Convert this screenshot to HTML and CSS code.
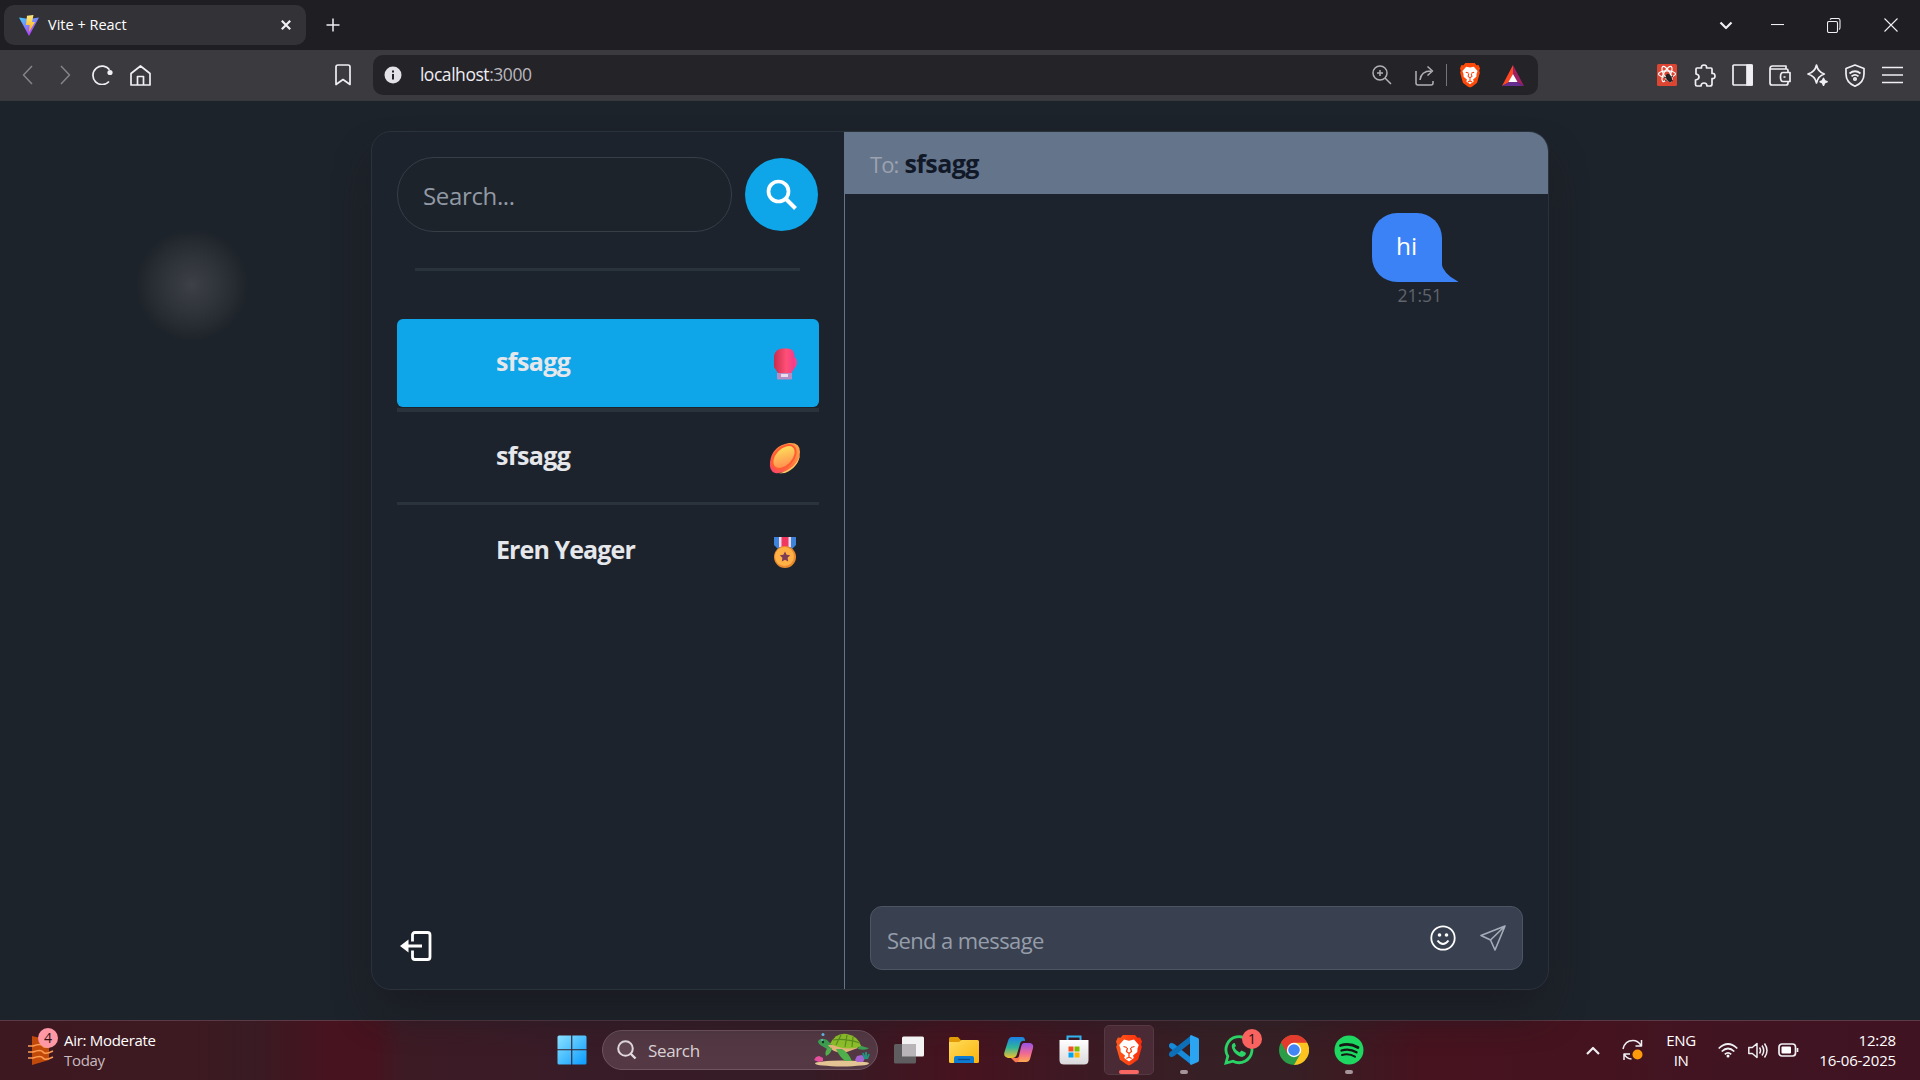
FILE: index.html
```html
<!DOCTYPE html>
<html lang="en">
<head>
<meta charset="utf-8">
<title>Vite + React</title>
<link rel="stylesheet" href="styles.css">
</head>
<body>
<svg class="defs" width="0" height="0">
  <defs>
    <linearGradient id="vite-a" x1="0" y1="0" x2=".6" y2="1"><stop offset="0" stop-color="#41d1ff"/><stop offset="1" stop-color="#bd34fe"/></linearGradient>
    <linearGradient id="vite-b" x1="0" y1="0" x2="0" y2="1"><stop offset="0" stop-color="#ffea83"/><stop offset="1" stop-color="#ffa800"/></linearGradient>
    <linearGradient id="glove" x1="0" x2="1"><stop offset="0" stop-color="#c92c4c"/><stop offset=".6" stop-color="#ff5076"/><stop offset="1" stop-color="#f53a8d"/></linearGradient>
    <linearGradient id="ball" x1="1" y1="0" x2="0" y2="1"><stop offset="0" stop-color="#fff05c"/><stop offset="1" stop-color="#ff7d4f"/></linearGradient>
    <linearGradient id="ball-edge" x1="1" y1="0" x2="0" y2="1"><stop offset="0" stop-color="#ffab4d"/><stop offset=".6" stop-color="#ff6a3c"/><stop offset="1" stop-color="#fb3f6d"/></linearGradient>
    <linearGradient id="win" x1="0" y1="0" x2="1" y2="1"><stop offset="0" stop-color="#8be2ff"/><stop offset="1" stop-color="#0a9bff"/></linearGradient>
    <linearGradient id="folder" x1="0" y1="0" x2="1" y2="1"><stop offset="0" stop-color="#ffdc5c"/><stop offset="1" stop-color="#fbb40c"/></linearGradient>
    <linearGradient id="cop-a" x1="0" y1="0" x2="0" y2="1"><stop offset="0" stop-color="#1b7fe8"/><stop offset=".5" stop-color="#2fb59a"/><stop offset="1" stop-color="#f2c12e"/></linearGradient>
    <linearGradient id="cop-b" x1="0" y1="0" x2="0" y2="1"><stop offset="0" stop-color="#9a52e8"/><stop offset=".55" stop-color="#f06a94"/><stop offset="1" stop-color="#ffa94e"/></linearGradient>
    <linearGradient id="store" x1="0" y1="0" x2="0" y2="1"><stop offset="0" stop-color="#fff"/><stop offset="1" stop-color="#d9d9dc"/></linearGradient>
    <linearGradient id="brave" x1="0" y1="0" x2="1" y2="0"><stop offset="0" stop-color="#ff5a1c"/><stop offset="1" stop-color="#fb2b0a"/></linearGradient>
    <g id="lion">
      <path d="M7 0h12l2.500 2.800 2.600-.3L26 6.500l-1 3 .8 2.500-3.600 12.500L16 29l-3 1.500L10 29l-6.200-4.500L.2 12l.8-2.500-1-3 1.900-4 2.600.3z"/>
      <path fill="#fff" d="M8 4.500l5 1.200 5-1.200 4.800 5.500-1.300 3.500-.2 3.500-4.300 3.500.8 2.500-4.800 3.500-4.800-3.500.8-2.500L4.700 17l-.2-3.500L3.200 10z"/>
      <path fill="none" stroke="#f9420f" stroke-width="1.300" d="M7.500 11.500l3.500 1M18.500 11.500l-3.500 1M11.500 13l-1 3.500 2.500 2 2.500-2-1-3.500M13 19v3M10.300 23.500l2.700-1.300 2.700 1.300"/>
    </g>
  </defs>
</svg>

<header class="browser">
  <div class="tabstrip">
    <div class="tab">
      <svg width="20" height="21" viewBox="0 0 20 21"><path fill="url(#vite-a)" d="M0 2.500L10 4l10-1.500L10 21z"/><path fill="url(#vite-b)" d="M8 .7L14.500 0 13 7h3l-6 10 .7-7H7z"/></svg>
      <span class="tab-title">Vite + React</span>
      <svg class="line bold" width="10" height="10" viewBox="0 0 10 10"><path d="M.8.800l8.400 8.400M9.200.800L.8 9.200"/></svg>
    </div>
    <svg class="line plus" width="14" height="14" viewBox="0 0 14 14"><path d="M7 .5v13M.5 7h13"/></svg>
    <div class="caption">
      <span class="cap-drop"><svg class="line bold" width="14" height="9" viewBox="0 0 14 9"><path d="M1.500 1.500L7 7l5.500-5.500"/></svg></span>
      <span class="cap"><svg class="line thin" width="13" height="3" viewBox="0 0 13 3"><path d="M0 .5h13"/></svg></span>
      <span class="cap"><svg class="line thin" width="14" height="15" viewBox="0 0 14 15"><rect x=".5" y="3.500" width="10" height="11" rx="1.500"/><path d="M3 1.500Q4 .5 5 .5h6q2 0 2 2v7q0 1.500-1 2"/></svg></span>
      <span class="cap"><svg class="line thin" width="14" height="14" viewBox="0 0 14 14"><path d="M.5.500l13 13M13.500.500l-13 13"/></svg></span>
    </div>
  </div>
  <div class="toolbar">
    <nav class="nav">
      <span class="tool dim"><svg class="line" width="11" height="20" viewBox="0 0 11 20"><path d="M10 1L1.500 10 10 19"/></svg></span>
      <span class="tool dim forward"><svg class="line" width="11" height="20" viewBox="0 0 11 20"><path d="M1 1l8.500 9L1 19"/></svg></span>
      <span class="tool"><svg class="line mid" width="21" height="20" viewBox="0 0 21 20"><path d="M17 16.500A9.200 9.200 0 1 1 17.500 4.800"/><circle cx="18" cy="7.500" r="2.600" fill="#f0eff3" stroke="none"/></svg></span>
      <span class="tool"><svg class="line mid" width="21" height="21" viewBox="0 0 21 21"><path d="M1 8.500l9.500-7.500L20 8.500V20H1zM7.500 20v-8.500h6V20"/></svg></span>
    </nav>
    <svg class="line mid bookmark" width="16" height="22" viewBox="0 0 16 22"><path d="M1 3q0-2 2-2h10q2 0 2 2v17.500l-7-5-7 5z"/></svg>
    <div class="omnibox">
      <svg width="18" height="18" viewBox="0 0 18 18"><circle cx="9" cy="9" r="8.500" fill="#e3e2e7"/><path stroke="#242328" stroke-width="2" d="M9 8v5.500M9 4.500v2"/></svg>
      <span class="url">localhost<span class="port">:3000</span></span>
      <span class="omni-slot"><svg class="line grey" width="20" height="20" viewBox="0 0 20 20"><circle cx="8" cy="8" r="7"/><path d="M13 13l6 6M8 5v6M5 8h6"/></svg></span>
      <span class="omni-slot"><svg class="line grey" width="20" height="21" viewBox="0 0 20 21"><path d="M1 6v12q0 2 2 2h13q2 0 2-2v-2M5 15q1-9 11-9M12.500 1.500L17.500 6l-5 4.500"/></svg></span>
      <i class="omni-sep"></i>
      <span class="omni-slot"><svg width="20" height="25" viewBox="0 0 26 31" preserveAspectRatio="none"><use href="#lion" fill="#ff4b0a"/></svg></span>
      <span class="omni-slot"><svg width="22" height="21" viewBox="0 0 22 21"><path fill="#ff4724" d="M11 0L0 21l7.500-4L11 9z"/><path fill="#9e1f63" d="M11 0l11 21-7.500-4L11 9z"/><path fill="#662d91" d="M0 21h22l-7.500-4h-7z"/><path fill="#fff" d="M11 9l4.500 8h-9z"/></svg></span>
    </div>
    <div class="extensions">
      <span class="tool"><svg width="20" height="22" viewBox="0 0 20 22"><rect width="20" height="22" rx="1.500" fill="#dd4533"/><g fill="none" stroke="#fff" stroke-width="1.200"><ellipse cx="10" cy="10" rx="8.500" ry="3.200"/><ellipse cx="10" cy="10" rx="8.500" ry="3.200" transform="rotate(60 10 10)"/><ellipse cx="10" cy="10" rx="8.500" ry="3.200" transform="rotate(120 10 10)"/></g><ellipse cx="12" cy="14" rx="2.600" ry="4.500" fill="#222" transform="rotate(-25 12 14)"/><path stroke="#222" d="M7 13l9 4M8 17l8-5"/></svg></span>
      <span class="tool"><svg class="line mid" width="22" height="23" viewBox="0 0 22 23"><path d="M2 5q0-1 1-1h4.500q-.5-3 2.500-3t2.500 3H17q1 0 1 1v4.500q3-.5 3 2.500t-3 2.500V20q0 2-2 2h-3q0-3-3-3t-3 3H3q-1.500 0-1.500-1.500V16q3.500-.5 3.500-3T2 10z"/></svg></span>
      <span class="tool"><svg class="line mid" width="21" height="22" viewBox="0 0 21 22"><rect x="1" y="1" width="19" height="20" rx="1"/><path fill="#f0eff3" d="M15 1h5v20h-5z"/></svg></span>
      <span class="tool"><svg class="line mid" width="22" height="21" viewBox="0 0 22 21"><path d="M19 7V5.500q0-1.500-1.500-1.500H1V18q0 2 2 2h14q2 0 2-2v-1.500M1 4q0-3 2.500-3H17v3M21 7.500h-7q-2.500 0-2.500 4.500t2.500 4.500h7zM14.500 12h2"/></svg></span>
      <span class="tool"><svg class="line mid" width="21" height="22" viewBox="0 0 21 22"><path d="M9.500 1q1.500 7 7.800 9Q11 12 9.500 19 8 12 1 10 8 8 9.500 1z"/><path fill="#f0eff3" d="M16.500 14.500l1 2.200 2.500 1-2.500 1-1 2.500-1-2.500-2.300-1 2.300-1z"/></svg></span>
      <span class="tool"><svg class="line mid" width="20" height="23" viewBox="0 0 20 23"><path d="M10 1l9 3.500V10q0 8.500-9 12.200Q1 18.500 1 10V4.500zM4.500 9.500q5.500-4.500 11 0M6.500 12.300q3.500-3 7 0"/><circle cx="10" cy="15" r="1.200"/></svg></span>
      <span class="tool"><svg class="line mid" width="21" height="18" viewBox="0 0 21 18"><path d="M0 1.500h21M0 9h21M0 16.500h21"/></svg></span>
    </div>
  </div>
</header>

<main class="page">
  <i class="glow"></i>
  <section class="chat">
    <aside class="sidebar">
      <div class="search">
        <div class="search-input">Search...</div>
        <div class="search-btn"><svg width="32" height="32" viewBox="0 0 32 32"><circle cx="12.500" cy="12.500" r="10" fill="none" stroke="#fff" stroke-width="3.700"/><path d="M19 19l10.500 10.500" stroke="#fff" stroke-width="4"/></svg></div>
      </div>
      <i class="rule"></i>
      <ul class="people">
        <li class="person active"><span>sfsagg</span>
          <svg width="32" height="32" viewBox="0 0 32 32"><path fill="#fa4389" d="M22 8q6 1 6 6 0 6-6 8z"/><path fill="url(#glove)" d="M14 .5h5q5.500 0 6.500 6.500v13L22.500 25H9l-4-6V8Q6.500.500 14 .500z"/><path fill="#b58fc3" d="M8 25h15v5.500q0 1-1 1H9q-1 0-1-1z"/><path fill="#e9dced" d="M12 26h7v3h-7z"/></svg></li>
        <li class="person"><span>sfsagg</span>
          <svg width="32" height="32" viewBox="0 0 32 32"><path fill="url(#ball-edge)" d="M20 1q11-1 11 9 0 12-11 18-7 4-14 3-6-2-5-11Q3 4 20 1z"/><path fill="#ffc861" d="M31 12q-1 13-15 19l-6 .5Q28 26 31 12z"/><ellipse cx="15" cy="15" rx="14" ry="9" transform="rotate(-47 15 15)" fill="url(#ball)" stroke="#ff5c31" stroke-width="2"/></svg></li>
        <li class="person"><span>Eren Yeager</span>
          <svg width="32" height="32" viewBox="0 0 32 32"><path fill="#3d83dc" d="M5 1h22v8l-4 4H9l-4-4z"/><path fill="#e5dcf2" d="M10 1h12v10H10z"/><path fill="#f2385f" d="M12.500 1h7v10h-7z"/><circle cx="16" cy="21" r="11" fill="#e98a2e"/><circle cx="15.500" cy="20.500" r="9.500" fill="#ffb145"/><path fill="#7d3d55" d="M16 15.500l1.600 3.300 3.600.5-2.600 2.500.6 3.700-3.200-1.700-3.200 1.700.6-3.700-2.600-2.500 3.600-.5z"/></svg></li>
      </ul>
      <svg class="logout" width="32" height="30" viewBox="0 0 32 30"><path fill="none" stroke="#fff" stroke-width="2.800" d="M12.500 10.500V4q0-2.500 2.500-2.500h12.500Q30 1.500 30 4v22q0 2.500-2.500 2.500H15q-2.500 0-2.500-2.500v-6.500M6 15h16"/><path fill="#fff" d="M0 15l8.500-6.500v13z"/></svg>
    </aside>
    <section class="thread">
      <div class="thread-head"><span class="to">To:</span><b>sfsagg</b></div>
      <div class="messages">
        <div class="message">
          <div class="bubble">hi<svg class="tail" width="18" height="20" viewBox="0 0 18 20"><path fill="#3b82f6" d="M0 0Q2 12 17 19.500q1 .5-1 .5H0z"/></svg></div>
          <time>21:51</time>
        </div>
      </div>
      <div class="composer">
        <span>Send a message</span>
        <svg width="26" height="26" viewBox="0 0 26 26"><circle cx="13" cy="13" r="11.700" fill="none" stroke="#fff" stroke-width="1.800"/><circle cx="9.500" cy="10" r="1.800" fill="#fff"/><circle cx="16.500" cy="10" r="1.800" fill="#fff"/><path fill="none" stroke="#fff" stroke-width="2" d="M7.500 15.500q5.500 7 11 0"/></svg>
        <svg width="26" height="26" viewBox="0 0 26 26"><path fill="none" stroke="#a5adba" stroke-width="1.600" stroke-linejoin="round" d="M25 1L1 10.500l9.500 4.500L15 25zL10.500 15"/></svg>
      </div>
    </section>
  </section>
</main>

<footer class="taskbar">
  <div class="weather">
    <div class="weather-icon"><svg width="26" height="30" viewBox="0 0 26 30"><path fill="#c14a0b" d="M4 1l17 4v20L4 30z"/><path stroke="#ff9a50" stroke-width="1.600" fill="none" d="M0 11h5q8-3 10 0t10-1M0 17h5q8-3 10 0t10-1M0 23h5q8-3 10 0t10-1"/></svg><i class="badge pink">4</i></div>
    <div class="weather-text"><span>Air: Moderate</span><span class="faint">Today</span></div>
  </div>
  <div class="apps">
    <span class="app start"><svg width="30" height="30" viewBox="0 0 30 30"><path fill="url(#win)" d="M2 .5h12.200v13.700H.5V2Q.5.500 2 .5zM15.300.500H28q1.500 0 1.500 1.500v12.200H15.300zM.5 15.300h13.700v14.200H2Q.5 29.500.5 28zM15.300 15.300h14.200V28q0 1.500-1.500 1.500H15.300z"/></svg></span>
    <div class="task-search">
      <svg width="20" height="20" viewBox="0 0 20 20"><circle cx="8.500" cy="8.500" r="7.300" fill="#ffffff14" stroke="#e4dbe0" stroke-width="2"/><path stroke="#e4dbe0" stroke-width="2.400" d="M13.500 13.500L18.500 18.500"/></svg>
      <span>Search</span>
      <svg width="56" height="34" viewBox="0 0 56 34"><ellipse cx="28" cy="30.500" rx="27" ry="3" fill="#e5c493"/><path fill="#3fa052" d="M45 12q8 3 10 3-3 3-11 1zM8 13q-4-2-4-5 3-4 9-1l5 5-5 4z"/><path fill="#e6b57a" d="M14 12q4 8 16 8l14-5-4-4z"/><path fill="#8fc12b" d="M16 11Q22-1 33 1q11 2 14 12-12 6-31-2z"/><path fill="none" stroke="#5c8f1e" stroke-width="1.200" d="M22 12l5-10M31 14l2-12M38 14l1-10M19 7q12-2 27 3"/><path fill="#4fb04c" d="M22 16q3 7 9 12h7q-4-9-10-12zM14 14q-4 6-2 9 5-2 6-8z"/><circle cx="9" cy="9" r="1.200" fill="#12351d"/><path fill="#e6509e" d="M0 27l2-3 3-1 4 2v3l-4 1z"/><path fill="#a563d1" d="M41 27l2-4 5-1 3 3-2 4h-6z"/><path stroke="#23917e" stroke-width="2" fill="none" d="M51 26l-2-6M52 26l0-7M53 26l2-5"/><circle cx="9" cy="1.500" r="1.500" fill="#68bfe8"/><circle cx="8" cy="7" r="1" fill="#68bfe8"/></svg>
    </div>
    <span class="app"><svg width="30" height="28" viewBox="0 0 30 28"><rect x="8" y=".5" width="22" height="20" rx="1.500" fill="#f4f3f4"/><rect y="8" width="22" height="19.500" rx="1.500" fill="#5f5d5f"/><path fill="#b9b4b7" d="M8 8h14v12.500H8z"/></svg></span>
    <span class="app"><svg width="30" height="28" viewBox="0 0 30 28"><path fill="#e19b06" d="M0 2.500Q0 1 1.500 1H9l3.500 4H29v8H0z"/><path fill="url(#folder)" d="M0 6h10l2.500-2H28.500Q30 4 30 5.500v20Q30 27 28.500 27h-27Q0 27 0 25.500z"/><path fill="#0d7bd1" d="M5 27v-5q0-2 2-2h16q2 0 2 2v5z"/><path stroke="#0a4b8d" stroke-width="1.300" d="M9 23.500h12"/></svg></span>
    <span class="app"><svg width="30" height="28" viewBox="0 0 30 28"><path fill="url(#cop-b)" d="M20 7h6q4 1 3 5l-3 11q-1 3-4 3h-8q-3 0-4-2 4 1 5-4l2-9q1-4 3-4z"/><path fill="url(#cop-a)" d="M8 1h10q3 0 3 4-4-1-5 3l-3 10q-1 4-5 4H4q-5-1-3.500-6L4 5q1-4 4-4z"/><path fill="#fa7651" d="M7 22h6q3-1 4-5l-2 7q-1 3-4 2z"/></svg></span>
    <span class="app"><svg width="30" height="30" viewBox="0 0 30 30"><path fill="none" stroke="#32b4ef" stroke-width="2" d="M8.500 7V1.500h13V7"/><path fill="url(#store)" d="M.5 5h29v20q0 4.500-4.500 4.500H5Q.5 29.500.5 25z"/><path fill="#f25022" d="M9.500 11.500H14.500v5h-5z"/><path fill="#7fba00" d="M15.500 11.500h5v5h-5z"/><path fill="#00a4ef" d="M9.500 17.500h5v5h-5z"/><path fill="#ffb900" d="M15.500 17.500h5v5h-5z"/></svg></span>
    <span class="app open"><svg width="26" height="31" viewBox="0 0 26 31"><use href="#lion" fill="url(#brave)"/></svg><i class="run on"></i></span>
    <span class="app"><svg width="30" height="30" viewBox="0 0 30 30"><path fill="#1689d8" d="M0 9.500L2 7.800l3 1L22 22.500v7L1 13q-1.500-1.500-1-3.500z"/><path fill="#0c6fb8" d="M0 20.500L2 22.200l3-1L22 7.500v-7L1 17q-1.500 1.500-1 3.500z"/><path fill="#2ba5f2" d="M22 0l7 3q1 .5 1 2v20q0 1.500-1 2l-7 3-1-1V1z"/></svg><i class="run"></i></span>
    <span class="app"><svg width="30" height="30" viewBox="0 0 30 30"><path fill="none" stroke="#2bd366" stroke-width="2.800" d="M2 28l1.800-6.700A13 13 0 1 1 9 26.200z"/><path fill="#2bd366" d="M10 8q-3 1-2 5 2 6 8 8.500 4 1.500 6-2.500l-.5-1.500-4-2-2 2q-4-2-5-5L12 11l-1.300-3z"/></svg><i class="badge red">1</i></span>
    <span class="app"><svg width="30" height="30" viewBox="0 0 30 30"><circle cx="15" cy="15" r="15" fill="#2b9c48"/><path fill="#e33b2e" d="M2 7.500A15 15 0 0 1 28 7.500L15 15z"/><path fill="#fcc31e" d="M15 7.500h13A15 15 0 0 1 15 30l6.500-11.200z"/><path fill="#e33b2e" d="M2 7.500Q6 1 15 0q9 1 13 7.500H15l-6.500 11z"/><circle cx="15" cy="15" r="7.200" fill="#fff"/><circle cx="15" cy="15" r="5.800" fill="#4285f4"/></svg></span>
    <span class="app"><svg width="30" height="30" viewBox="0 0 30 30"><circle cx="15" cy="15" r="14.500" fill="#1ed760"/><path fill="none" stroke="#161616" stroke-width="2.800" stroke-linecap="round" d="M6.500 10.500q9-3 17.500 2"/><path fill="none" stroke="#161616" stroke-width="2.300" stroke-linecap="round" d="M7.500 15.500q8-2.500 15 1.800"/><path fill="none" stroke="#161616" stroke-width="2" stroke-linecap="round" d="M8 20q7-2 13 1.700"/></svg><i class="run"></i></span>
  </div>
  <div class="tray">
    <svg class="line bold" width="14" height="9" viewBox="0 0 14 9"><path d="M1 8l6-6 6 6"/></svg>
    <svg class="line sync" width="22" height="22" viewBox="0 0 22 22"><path d="M1 10Q3 1.500 11 1.500q5 0 8 5M19.500 1v6h-6M2 21v-6h6M2.500 15.500q2 4 7 4.500"/><circle cx="15.500" cy="15.500" r="5" fill="#ff9a0a" stroke="none"/></svg>
    <div class="lang"><span>ENG</span><span>IN</span></div>
    <svg class="line mid" width="20" height="15" viewBox="0 0 20 15"><path d="M.7 5.500q9.300-9 18.600 0M3.700 8.500q6.300-6 12.600 0M6.800 11.300q3.200-3 6.400 0"/><circle cx="10" cy="13" r="1.500" fill="#fff" stroke="none"/></svg>
    <svg class="line" width="20" height="17" viewBox="0 0 20 17"><path d="M.8 5.500h3.500L9 1.500v14l-4.700-4H.8zM11.500 5.500q2 3 0 6M14 3.500q3.500 5 0 10M16.500 1.500q5 7 0 14"/></svg>
    <svg class="line mid" width="21" height="14" viewBox="0 0 21 14"><rect x="1" y="1" width="16.500" height="12" rx="3"/><rect x="3.500" y="3.500" width="9.500" height="7" rx="1" fill="#fff" stroke="none"/><path d="M19.500 5v4"/></svg>
    <div class="clock"><span>12:28</span><span>16-06-2025</span></div>
  </div>
</footer>
</body>
</html>
```
FILE: styles.css
```css
* { box-sizing: border-box; }

body {
  margin: 0;
  width: 1920px;
  height: 1080px;
  overflow: hidden;
  display: flex;
  flex-direction: column;
  background: #1d232a;
  color: #fff;
  font-family: "Open Sans", "Noto Sans", sans-serif;
}

svg { display: block; flex: none; }
.defs { position: absolute; }
i { font-style: normal; }

.line { fill: none; stroke: #f0eff3; stroke-width: 1.5; stroke-linejoin: round; }
.line.thin { stroke-width: 1.1; }
.line.mid { stroke-width: 1.7; }
.line.bold { stroke-width: 2.2; }
.line.grey { stroke: #b2b0b6; }

/* Browser chrome */
.tabstrip { height: 50px; background: #1f1e23; display: flex; align-items: center; padding-left: 4px; }
.tab {
  width: 302px; height: 40px;
  border-radius: 10px;
  background: #333237;
  display: flex; align-items: center;
  padding: 0 15px;
}
.tab-title { flex: 1; margin: -2px 0 0 9px; font-size: 14.5px; letter-spacing: 0; }
.plus { margin-left: 20px; }
.caption { margin-left: auto; display: flex; align-items: center; height: 50px; padding-right: 1px; }
.cap-drop { width: 46px; display: flex; justify-content: center; }
.cap { width: 56.6px; display: flex; justify-content: center; }

.toolbar {
  height: 51px;
  background: #3b3a3f;
  border-bottom: 1px solid #37393f;
  display: flex; align-items: center;
  padding: 0 8.5px;
}
.nav, .extensions { display: flex; }
.tool { width: 37.6px; height: 24px; display: flex; align-items: center; justify-content: center; }
.tool.dim .line { stroke: #85848a; }
.tool.forward { padding-left: 2px; }
.bookmark { margin-left: 176.5px; }
.omnibox {
  width: 1165px; height: 40px;
  margin-left: 21.5px;
  border-radius: 10px;
  background: #242328;
  display: flex; align-items: center;
  padding: 0 4px 0 11px;
}
.url { flex: 1; margin: -2px 0 0 18px; font-size: 17.5px; letter-spacing: -0.45px; color: #eeedf2; line-height: 24px; }
.port { color: #b9b7bd; }
.omni-slot { width: 42.5px; display: flex; justify-content: center; }
.omni-sep { width: 1px; height: 22px; background: #77757c; margin-right: 2px; }
.extensions { margin-left: auto; }

/* Chat page */
.page {
  position: relative;
  height: 919px;
  padding: 30px 371px 0;
  background: #1d232a;
}
.glow {
  position: absolute;
  left: 132px; top: 124px;
  width: 120px; height: 120px;
  background: radial-gradient(circle closest-side, #3e4148 0, #383b42 16%, #2f333a 45%, #262a31 72%, #1d232a 94%);
  border-radius: 50%;
}
.chat {
  position: relative;
  width: 1178px; height: 859px;
  border: 1px solid #2a323c;
  border-radius: 20px;
  overflow: hidden;
  background: #1d232c;
  box-shadow: 0 25px 40px -8px #1b1b22;
  display: flex;
}
.sidebar {
  width: 473px;
  border-right: 1px solid #64748b;
  padding: 25px;
  display: flex; flex-direction: column;
}
.search { display: flex; align-items: center; gap: 13px; height: 75px; }
.search-input {
  width: 335px; height: 75px;
  flex: none;
  border: 1px solid #363e48;
  border-radius: 37px;
  background: #1d232a;
  padding: 0 25px;
  font-size: 24px; line-height: 76px;
  letter-spacing: -0.35px;
  color: #9199a5;
}
.search-btn {
  width: 73px; height: 73px;
  flex: none;
  border-radius: 50%;
  background: #0ea5e9;
  display: flex; align-items: center; justify-content: center;
}
.rule { height: 3px; margin: 36px 19px 48px 18px; background: #2a323c; }
.people { list-style: none; margin: 0; padding: 0; }
.person {
  height: 90px;
  padding: 0 18px 0 99px;
  display: flex; align-items: center; justify-content: space-between;
  font-size: 25px; font-weight: 700; line-height: 32px;
  letter-spacing: -0.6px;
  color: #e5e7eb;
}
.person span { margin-top: -4px; }
.person svg { margin-top: 2px; }
.person.active { height: 88px; background: #0ea5e9; border-radius: 6px; margin-bottom: 1px; }
.person:nth-child(n+2) { box-sizing: content-box; }
.person:nth-child(2) { border-top: 4px solid #2a323c; }
.person:nth-child(3) { border-top: 3px solid #2a323c; letter-spacing: -0.9px; padding-top: 1px; }
.logout { margin: auto 0 3px 3px; }

.thread { flex: 1; display: flex; flex-direction: column; }
.thread-head {
  height: 62px;
  background: #64748b;
  padding: 0 26px 0 25px;
  display: flex; align-items: center; gap: 6px;
  font-size: 25px;
  color: #111827;
  letter-spacing: -0.6px;
}
.to { color: #9ca3af; font-size: 22px; letter-spacing: -0.9px; margin-top: 2px; }
.messages { flex: 1; padding: 19px 89px 0 0; display: flex; flex-direction: column; align-items: flex-end; }
.message { display: flex; flex-direction: column; align-items: flex-end; margin-right: 17px; }
.bubble {
  position: relative;
  width: 70px; height: 69px;
  border-radius: 25px 25px 0 25px;
  background: #3b82f6;
  padding-left: 24px;
  font-size: 24.5px; line-height: 66px;
}
.tail { position: absolute; left: 69px; bottom: 0; }
time { font-size: 17.5px; line-height: 27px; color: #60646d; }
.composer {
  height: 64px;
  margin: 0 25px 19px;
  border: 1px solid #4b5563;
  border-radius: 12px;
  background: #394150;
  padding: 0 16px;
  display: flex; align-items: center; gap: 24px;
  font-size: 22px;
  letter-spacing: -0.6px;
  color: #969daa;
}
.composer span { flex: 1; margin-top: 3px; }

/* Taskbar */
.taskbar {
  height: 60px;
  border-top: 1px solid #5a3a44;
  background: linear-gradient(90deg, #3d1820 0, #3d1921 10%, #391b23 13%, #46131f 17%, #46131f 19.500%, #3d1b25 21%, #381c27 30%, #351c26 42%, #46131f 50%, #3c1a24 57%, #362025 63%, #362025 67%, #46131f 74%, #45131f 82%, #411422 90%, #401322 100%);
  display: flex; align-items: center;
  padding-bottom: 1px;
}
.weather { display: flex; align-items: center; width: 544px; padding-left: 28px; }
.weather-icon { position: relative; width: 26px; height: 30px; }
.badge {
  position: absolute;
  width: 20px; height: 20px;
  border-radius: 50%;
  font-size: 14px; line-height: 20px; text-align: center;
  color: #2b1015;
}
.badge.pink { left: 10px; top: -7px; background: #ff98a4; }
.badge.red { left: 31px; top: 4px; background: #f8635f; }
.weather-text { display: flex; flex-direction: column; margin: -1px 0 0 10px; font-size: 15px; line-height: 20px; letter-spacing: -0.3px; }
.faint { color: #c9bbc0; }
.apps { display: flex; align-items: center; }
.app { position: relative; width: 55px; height: 50px; display: flex; align-items: center; justify-content: center; }
.app.start { margin-right: 3px; }
.task-search {
  width: 276px; height: 40px;
  border: 1px solid #705560;
  border-radius: 20px;
  background: #543944;
  margin-right: 3px;
  padding: 0 7px 0 14px;
  display: flex; align-items: center;
}
.task-search span { flex: 1; margin-left: 11px; font-size: 17px; letter-spacing: -0.35px; color: #dcd2d7; }
.app.open { width: 50px; margin: 0 2.5px; border-radius: 5px; background: #4a2a35; border: 1px solid #553842; }
.run { position: absolute; bottom: 1px; left: 24px; width: 8px; height: 4px; border-radius: 2px; background: #a59499; }
.run.on { left: 14px; bottom: 0; width: 20px; background: #f96763; }
.tray { flex: 1; display: flex; align-items: center; justify-content: flex-end; padding-right: 24px; font-size: 15px; line-height: 20px; letter-spacing: -0.4px; }
.sync { margin-left: 22px; }
.lang { width: 32px; margin: -1px 21px 0; text-align: center; display: flex; flex-direction: column; }
.tray .lang ~ svg { margin-right: 10px; }
.clock { width: 87px; margin-top: -1px; display: flex; flex-direction: column; text-align: right; letter-spacing: -0.15px; }
```
